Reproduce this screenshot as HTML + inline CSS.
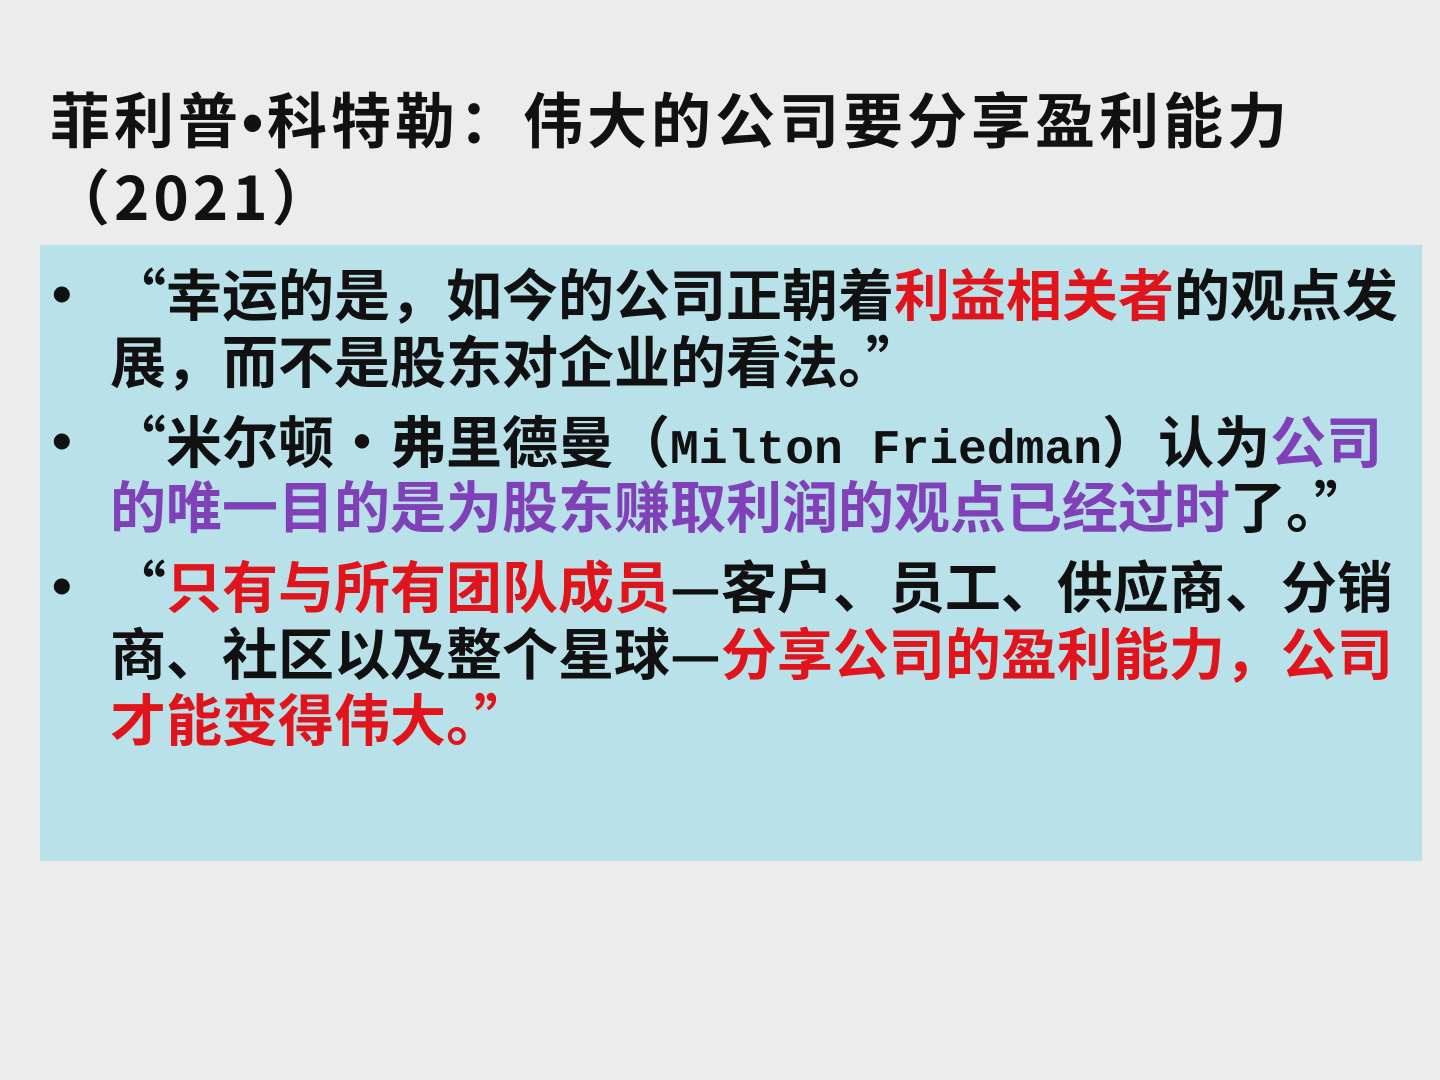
<!DOCTYPE html>
<html><head><meta charset="utf-8"><style>
body{margin:0;width:1440px;height:1080px;background:#ececec;position:relative;overflow:hidden;font-family:"Noto Sans CJK SC","WenQuanYi Zen Hei",sans-serif;font-weight:700;color:#111;}
.t{position:absolute;white-space:nowrap;line-height:1;}
.title{font-size:60px;letter-spacing:4px;}
.box{position:absolute;left:40px;top:245px;width:1382px;height:616px;background:#b9e1e9;}
.b{font-size:56px;}
.r{color:#e0141a}.p{color:#8040b8}
.m{font-family:"Liberation Mono",monospace;font-size:48px;}
.dot{position:absolute;font-size:56px;line-height:1;font-family:"Liberation Sans",sans-serif;}
</style></head><body>
<div class="t title" style="left:50px;top:88px;">菲利普<span style="font-family:'Liberation Sans',sans-serif">•</span>科特勒：伟大的公司要分享盈利能力</div>
<div class="t title" style="left:50px;top:165px;">（2021）</div>
<div class="box"></div>
<div class="dot" style="left:52px;top:266px;">•</div>
<div class="dot" style="left:52px;top:413px;">•</div>
<div class="dot" style="left:52px;top:558px;">•</div>
<div class="t b" style="left:110px;top:265px;">“幸运的是，如今的公司正朝着<span class="r">利益相关者</span>的观点发</div>
<div class="t b" style="left:110px;top:332px;">展，而不是股东对企业的看法。”</div>
<div class="t b" style="left:110px;top:412px;">“米尔顿·弗里德曼（<span class="m">Milton Friedman</span>）认为<span class="p">公司</span></div>
<div class="t b p" style="left:110px;top:477px;">的唯一目的是为股东赚取利润的观点已经过时<span style="color:#111">了。”</span></div>
<div class="t b" style="left:110px;top:557px;">“<span class="r">只有与所有团队成员</span>—客户、员工、供应商、分销</div>
<div class="t b" style="left:110px;top:624px;">商、社区以及整个星球—<span class="r">分享公司的盈利能力，公司</span></div>
<div class="t b r" style="left:110px;top:690px;">才能变得伟大。”</div>
</body></html>
